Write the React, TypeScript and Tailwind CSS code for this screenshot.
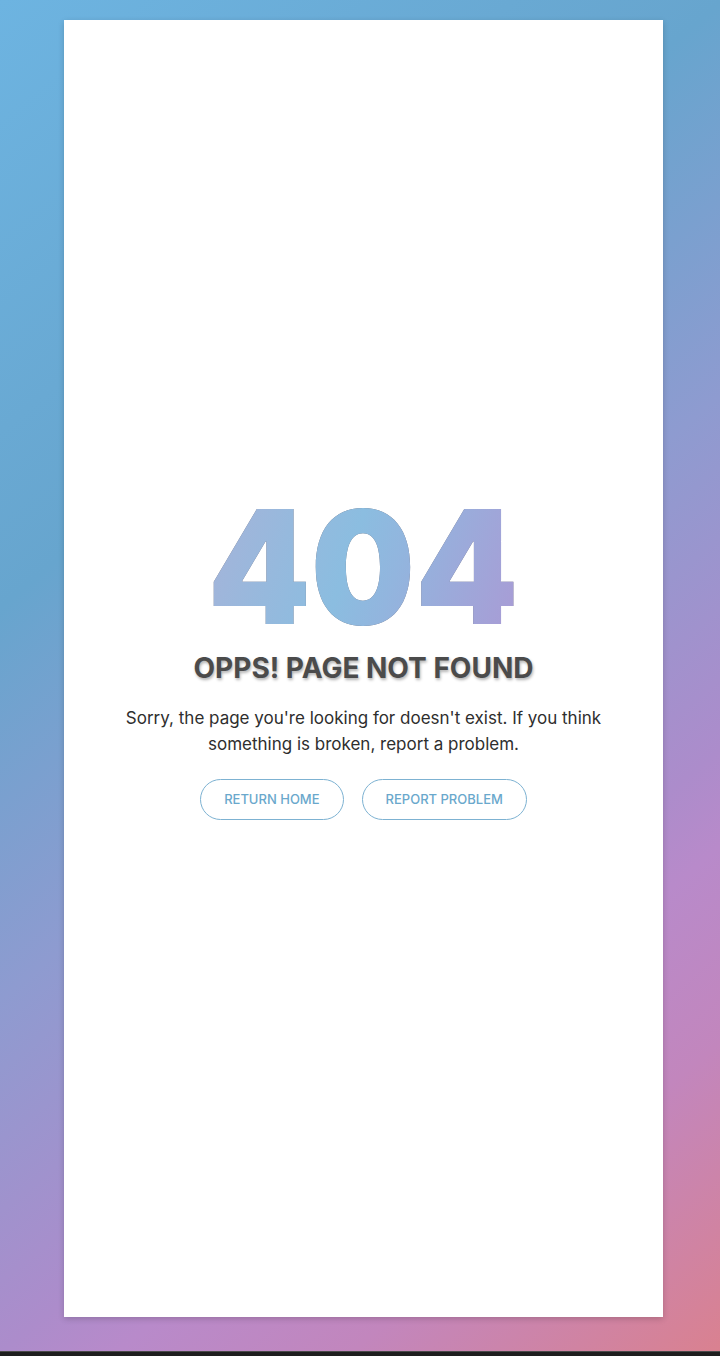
import React from "react";

export default function App() {
  return (
    <div className="flex h-[1356px] w-[720px] flex-col overflow-hidden bg-[linear-gradient(140deg,#6db4e1_0%,#69a9d3_22%,#67a5ce_31%,#8e9bd0_51%,#ac8ccb_69%,#b88aca_74%,#c286bd_84%,#da818f_100%)]">
      <div className="flex-1 pt-[20px]">
        <div className="ml-[64px] flex h-[1297px] w-[599px] flex-col items-center bg-white pt-[487px] shadow-[0_2px_6px_rgba(0,0,0,0.18)]">
          <div className="scale-x-[0.93] [filter:drop-shadow(0_0_0.6px_rgba(60,60,80,0.75))]">
            <span className="block bg-[linear-gradient(110deg,#a6b3d9_0%,#96b9dd_25%,#8bbde0_45%,#92b5de_60%,#a99bd5_100%)] bg-clip-text font-['Inter',sans-serif] text-[158px] font-black leading-[120px] text-transparent">
              404
            </span>
          </div>
          <h1 className="mt-[24px] font-['Inter',sans-serif] text-[28px] font-bold leading-[34px] text-[#4b4b4b] [text-shadow:1px_2px_3px_rgba(0,0,0,0.3)]">
            OPPS! PAGE NOT FOUND
          </h1>
          <p className="mt-[20px] max-w-[520px] text-center font-['Inter',sans-serif] text-[17px] leading-[26px] text-[#2e2e2e]">
            Sorry, the page you're looking for doesn't exist. If you think something is broken, report a problem.
          </p>
          <div className="mt-[22px] flex gap-[18px]">
            <button className="h-[41px] rounded-full border-[1.5px] border-[#7db2d2] px-[23px] font-['Inter',sans-serif] text-[13px] font-medium text-[#6aa8cc]">
              RETURN HOME
            </button>
            <button className="h-[41px] rounded-full border-[1.5px] border-[#7db2d2] px-[23px] font-['Inter',sans-serif] text-[13px] font-medium text-[#6aa8cc]">
              REPORT PROBLEM
            </button>
          </div>
        </div>
      </div>
      <div className="h-[5px] border-t border-[#4a4a4a] bg-[#1e1e1e]" />
    </div>
  );
}
